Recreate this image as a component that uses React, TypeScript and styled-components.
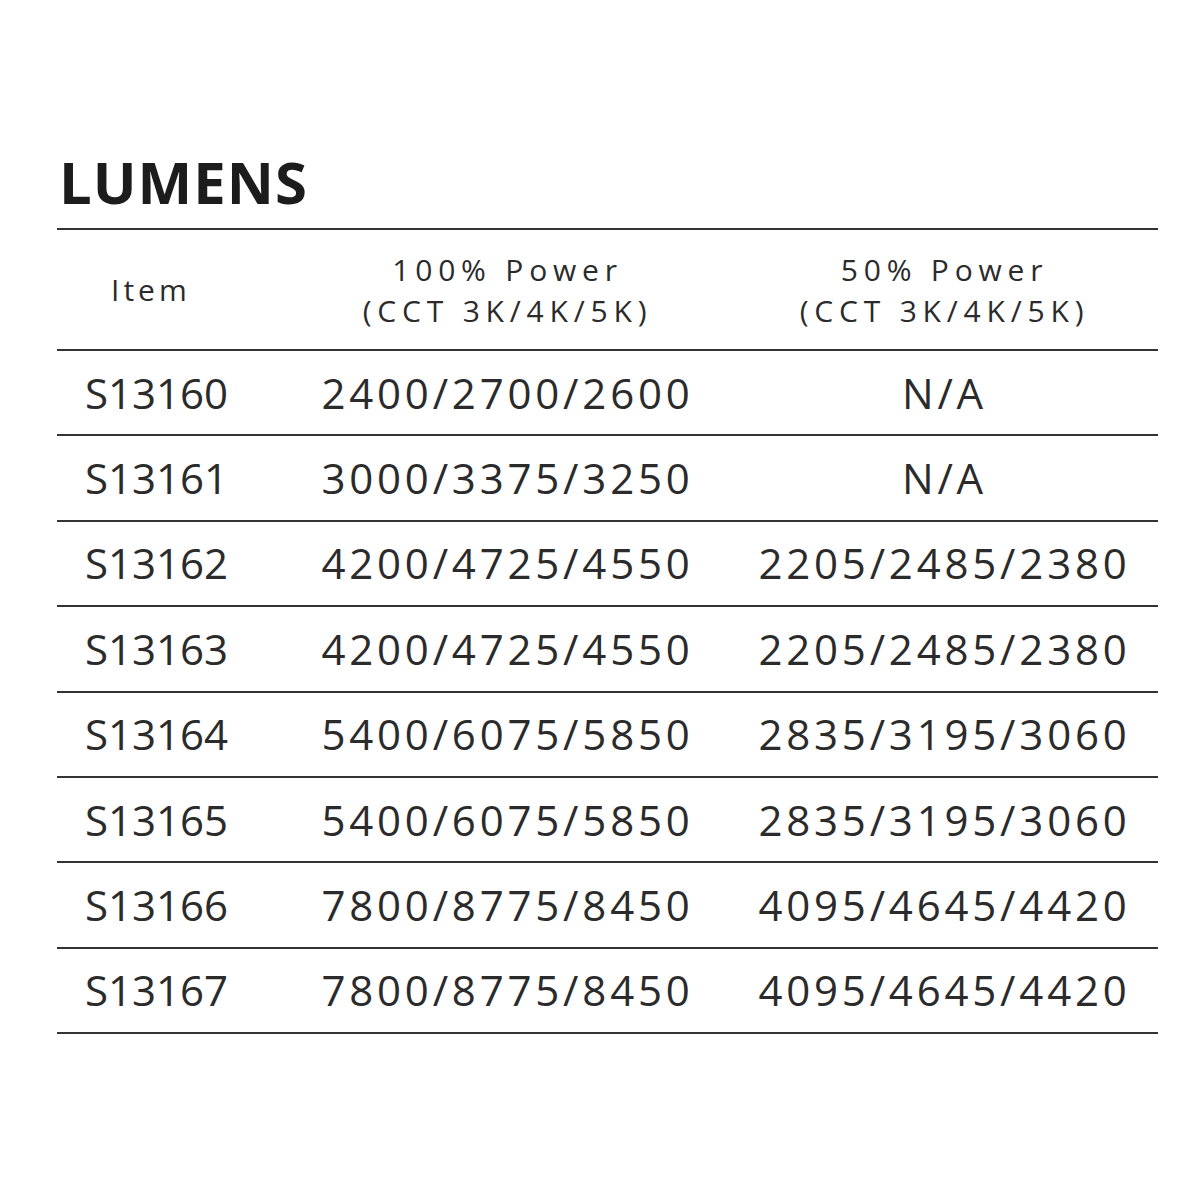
import React from "react";
import styled, { createGlobalStyle } from "styled-components";

const Global = createGlobalStyle`
  html, body { margin: 0; padding: 0; background: #ffffff; }
  body { font-family: "Open Sans", "Liberation Sans", sans-serif; color: #2b2b2b; }
`;

const Page = styled.div`
  width: 1200px;
  height: 1200px;
  box-sizing: border-box;
  padding: 147px 42px 0 57px;
`;

const Title = styled.h1`
  margin: 0 0 12px 2px;
  font-family: "Open Sans", sans-serif;
  font-weight: 700;
  font-size: 58px;
  line-height: 69px;
  letter-spacing: 1px;
  color: #1c1c1c;
`;

const Table = styled.div`
  display: flex;
  flex-direction: column;
  border-top: 2px solid #333;
`;

const Row = styled.div<{ $header?: boolean }>`
  display: grid;
  grid-template-columns: 227px 447px 1fr;
  align-items: center;
  height: ${(p) => (p.$header ? "119px" : "83.4px")};
  border-bottom: 2px solid #333;
`;

const HeadCell = styled.div<{ $first?: boolean }>`
  text-align: ${(p) => (p.$first ? "left" : "center")};
  padding-left: ${(p) => (p.$first ? "54px" : "0")};
  font-size: 30px;
  line-height: 41px;
  letter-spacing: ${(p) => (p.$first ? "4px" : "5.8px")};
  white-space: nowrap;
  color: #2b2b2b;
`;

const Cell = styled.div<{ $first?: boolean }>`
  text-align: ${(p) => (p.$first ? "left" : "center")};
  padding-left: ${(p) => (p.$first ? "28px" : "0")};
  font-size: 42px;
  line-height: 46px;
  letter-spacing: ${(p) => (p.$first ? "0px" : "3.8px")};
  white-space: nowrap;
  color: #2b2b2b;
`;

const rows: [string, string, string][] = [
  ["S13160", "2400/2700/2600", "N/A"],
  ["S13161", "3000/3375/3250", "N/A"],
  ["S13162", "4200/4725/4550", "2205/2485/2380"],
  ["S13163", "4200/4725/4550", "2205/2485/2380"],
  ["S13164", "5400/6075/5850", "2835/3195/3060"],
  ["S13165", "5400/6075/5850", "2835/3195/3060"],
  ["S13166", "7800/8775/8450", "4095/4645/4420"],
  ["S13167", "7800/8775/8450", "4095/4645/4420"],
];

export default function App() {
  return (
    <>
      <Global />
      <Page>
        <Title>LUMENS</Title>
        <Table>
          <Row $header>
            <HeadCell $first>Item</HeadCell>
            <HeadCell>
              100% Power
              <br />
              (CCT 3K/4K/5K)
            </HeadCell>
            <HeadCell>
              50% Power
              <br />
              (CCT 3K/4K/5K)
            </HeadCell>
          </Row>
          {rows.map((r) => (
            <Row key={r[0]}>
              <Cell $first>{r[0]}</Cell>
              <Cell>{r[1]}</Cell>
              <Cell>{r[2]}</Cell>
            </Row>
          ))}
        </Table>
      </Page>
    </>
  );
}
